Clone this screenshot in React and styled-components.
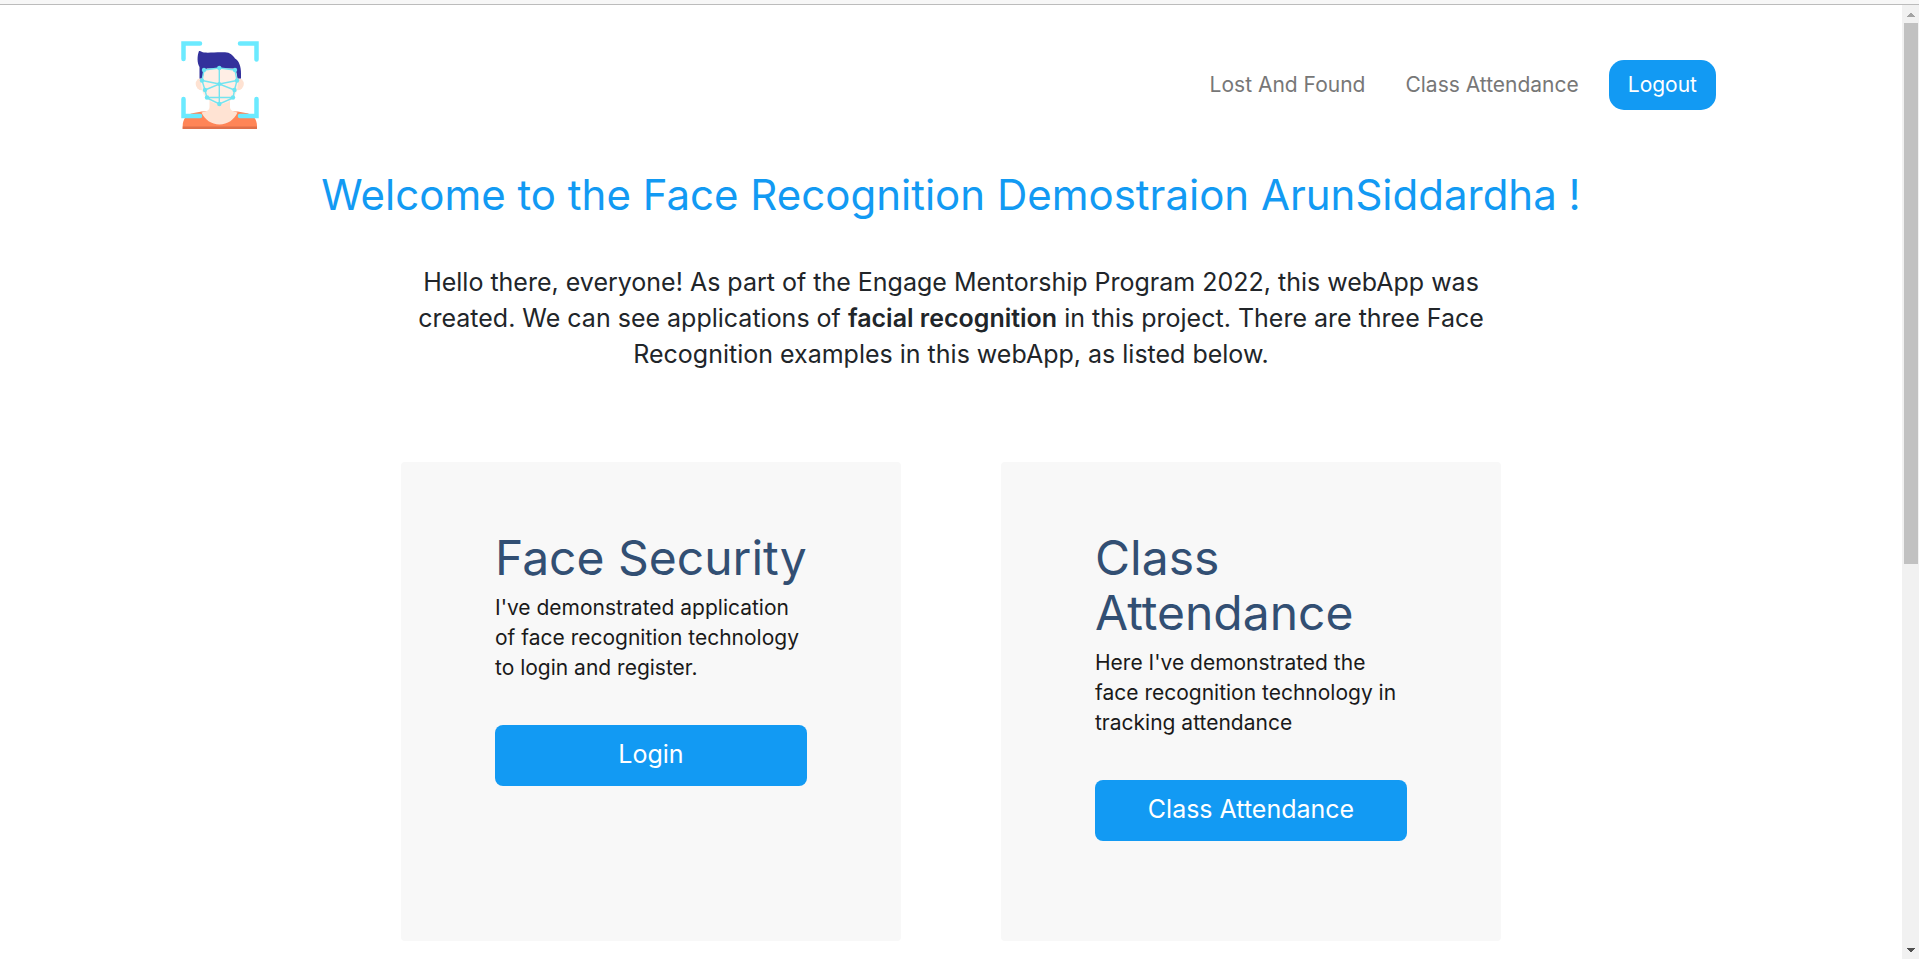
import React from "react";
import styled, { createGlobalStyle } from "styled-components";

const GlobalStyle = createGlobalStyle`
  *, *::before, *::after { box-sizing: border-box; }
  body {
    margin: 0;
    background: #fff;
    color: #212529;
    font-family: Inter, "Noto Sans", sans-serif;
    font-size: 21px;
    line-height: 30px;
  }
  h1, h2, p { margin: 0; font-weight: 400; }
`;

const Frame = styled.div`
  display: flex;
  flex-direction: column;
  height: 100vh;
  overflow: hidden;
`;

const TopEdge = styled.div`
  flex: none;
  height: 5px;
  background: #f7f7f7;
  border-bottom: 1px solid #bcbcbc;
`;

const Viewport = styled.div`
  flex: 1;
  min-height: 0;
  display: flex;
`;

const Page = styled.div`
  flex: 1;
  min-width: 0;
  overflow: hidden;
`;

const Header = styled.header`
  display: flex;
  align-items: center;
  justify-content: space-between;
  height: 160px;
  padding: 0 186px 0 181px;
`;

const LogoLink = styled.a`
  display: block;
  svg { display: block; }
`;

const Nav = styled.nav`
  display: flex;
  align-items: center;
  gap: 30px;
`;

const NavLinks = styled.div`
  display: flex;
  gap: 40px;
`;

const NavLink = styled.a`
  color: #777;
  text-decoration: none;
`;

const LogoutButton = styled.button`
  height: 50px;
  padding: 0 19px;
  border: 0;
  border-radius: 15px;
  background: #129af3;
  color: #fff;
  font: inherit;
`;

const Intro = styled.section`
  display: flex;
  flex-direction: column;
  align-items: center;
  gap: 45px;
  padding-top: 6px;
  text-align: center;
`;

const Title = styled.h1`
  color: #129af3;
  font-size: 42px;
  line-height: 48px;
`;

const Lead = styled.p`
  font-size: 25px;
  line-height: 36px;
  b { font-weight: 600; }
`;

const Cards = styled.section`
  display: flex;
  justify-content: center;
  gap: 100px;
  padding: 90px 0 100px;
`;

const Card = styled.article`
  width: 500px;
  min-height: 479px;
  padding: 68px 94px;
  border-radius: 4px;
  background: #f8f8f8;
`;

const CardTitle = styled.h2`
  margin-bottom: 8px;
  color: #324f73;
  font-size: 48px;
  line-height: 55px;
`;

const CardText = styled.p`
  margin-bottom: 42px;
  color: #1a1a1a;
  white-space: nowrap;
`;

const CardButton = styled.button`
  display: block;
  width: 100%;
  height: 61px;
  padding: 0 0 4px;
  border: 0;
  border-radius: 8px;
  background: #129af3;
  color: #fff;
  font: inherit;
  font-size: 25px;
`;

const ScrollTrack = styled.div`
  flex: none;
  display: flex;
  flex-direction: column;
  align-items: center;
  width: 17px;
  padding: 8px 0 7px 1px;
  background: #f1f1f1;
  svg { display: block; flex: none; }
`;

const ScrollThumb = styled.div`
  width: 14px;
  height: 57.6%;
  margin: 6px 0 auto;
  background: #c1c1c1;
`;

function Logo() {
  return (
    <svg width="78" height="88" viewBox="0 0 78 88" role="img" aria-label="Face recognition">
      <path d="M1.700 88v-3c0-7 4-12 11-13l8-1.500h36l8 1.500c7 1 11.300 6 11.300 13v3z" fill="#ff8557" />
      <path d="M1.700 85.500H76V88H1.700z" fill="#e0704a" />
      <path d="M28.500 55v11c0 3-2 4.500-8 5.500 3 7 10 12 18 12s15-5 18-12c-5-1-7.500-2.500-7.500-5.500V55z" fill="#ffe3d3" />
      <circle cx="21" cy="43" r="6.300" fill="#fee2d2" />
      <circle cx="56.500" cy="43" r="6.300" fill="#fee2d2" />
      <path d="M20 30c2-4 8-5 19-5s16 1 18 5v12c0 12-7 21-18 21s-19-9-19-21z" fill="#ffeee5" />
      <path d="M18.500 37.500V26c-2.500-4-2.500-11-.5-16 1.500-.5 3 1 5 1.500 6 .5 12-.500 21-.200 5 .200 8 3 10 6.200 4 2 6 8 6 15v5h-3.500c-.500-4-1-8-4-10H26c-3 1.500-4 5-4 10z" fill="#33319c" />
      <g fill="none" stroke="#6beaff" strokeWidth="4.500" strokeLinecap="round" strokeLinejoin="miter">
        <path d="M2.500 18V2.500H19M59 2.500H75.500V18.500M2.500 58V75H19M59 75H75.500V58" />
      </g>
      <g fill="none" stroke="#74e4f0" strokeWidth="1.400">
        <path d="M38.300 27v36M23 29l15.300-2L54 29M23 29l-2 10.500 3 9.500 2 8 12.300 6L52 57l1.500-8 2.500-9.500L54 29M21 39.500l17.300 3.500L56 39.500M24 49l14.300-6 15.200 6M26 56.500h26" />
      </g>
      <g fill="#6ce4f2">
        <circle cx="38.300" cy="27" r="2.200" /><circle cx="23" cy="29" r="2.200" /><circle cx="54" cy="29" r="2.200" />
        <circle cx="21" cy="39.500" r="2.200" /><circle cx="38.300" cy="43" r="2" /><circle cx="56" cy="39.500" r="2.200" />
        <circle cx="24" cy="49" r="2.200" /><circle cx="53.500" cy="49" r="2.200" /><circle cx="26" cy="56.500" r="2.200" />
        <circle cx="52" cy="56.500" r="2.200" /><circle cx="38.300" cy="63" r="2.200" />
      </g>
    </svg>
  );
}

export default function App() {
  return (
    <>
      <GlobalStyle />
      <Frame>
        <TopEdge />
        <Viewport>
          <Page>
            <Header>
              <LogoLink href="#home"><Logo /></LogoLink>
              <Nav>
                <NavLinks>
                  <NavLink href="#lost">Lost And Found</NavLink>
                  <NavLink href="#attendance">Class Attendance</NavLink>
                </NavLinks>
                <LogoutButton type="button">Logout</LogoutButton>
              </Nav>
            </Header>
            <main>
              <Intro>
                <Title>Welcome to the Face Recognition Demostraion ArunSiddardha !</Title>
                <Lead>
                  Hello there, everyone! As part of the Engage Mentorship Program 2022, this webApp was<br />
                  created. We can see applications of <b>facial recognition</b> in this project. There are three Face<br />
                  Recognition examples in this webApp, as listed below.
                </Lead>
              </Intro>
              <Cards>
                <Card>
                  <CardTitle>Face Security</CardTitle>
                  <CardText>
                    I've demonstrated application<br />of face recognition technology<br />to login and register.
                  </CardText>
                  <CardButton type="button">Login</CardButton>
                </Card>
                <Card>
                  <CardTitle>Class Attendance</CardTitle>
                  <CardText>
                    Here I've demonstrated the<br />face recognition technology in<br />tracking attendance
                  </CardText>
                  <CardButton type="button">Class Attendance</CardButton>
                </Card>
              </Cards>
            </main>
          </Page>
          <ScrollTrack aria-hidden="true">
            <svg width="8" height="4" viewBox="0 0 8 4" shapeRendering="crispEdges"><path d="M3 0h2v1h1v1h1v1h1v1H0V3h1V2h1V1h1z" fill="#a3a3a3" /></svg>
            <ScrollThumb />
            <svg width="8" height="4" viewBox="0 0 8 4" shapeRendering="crispEdges"><path d="M0 0h8v1H7v1H6v1H5v1H3V3H2V2H1V1H0z" fill="#505050" /></svg>
          </ScrollTrack>
        </Viewport>
      </Frame>
    </>
  );
}
